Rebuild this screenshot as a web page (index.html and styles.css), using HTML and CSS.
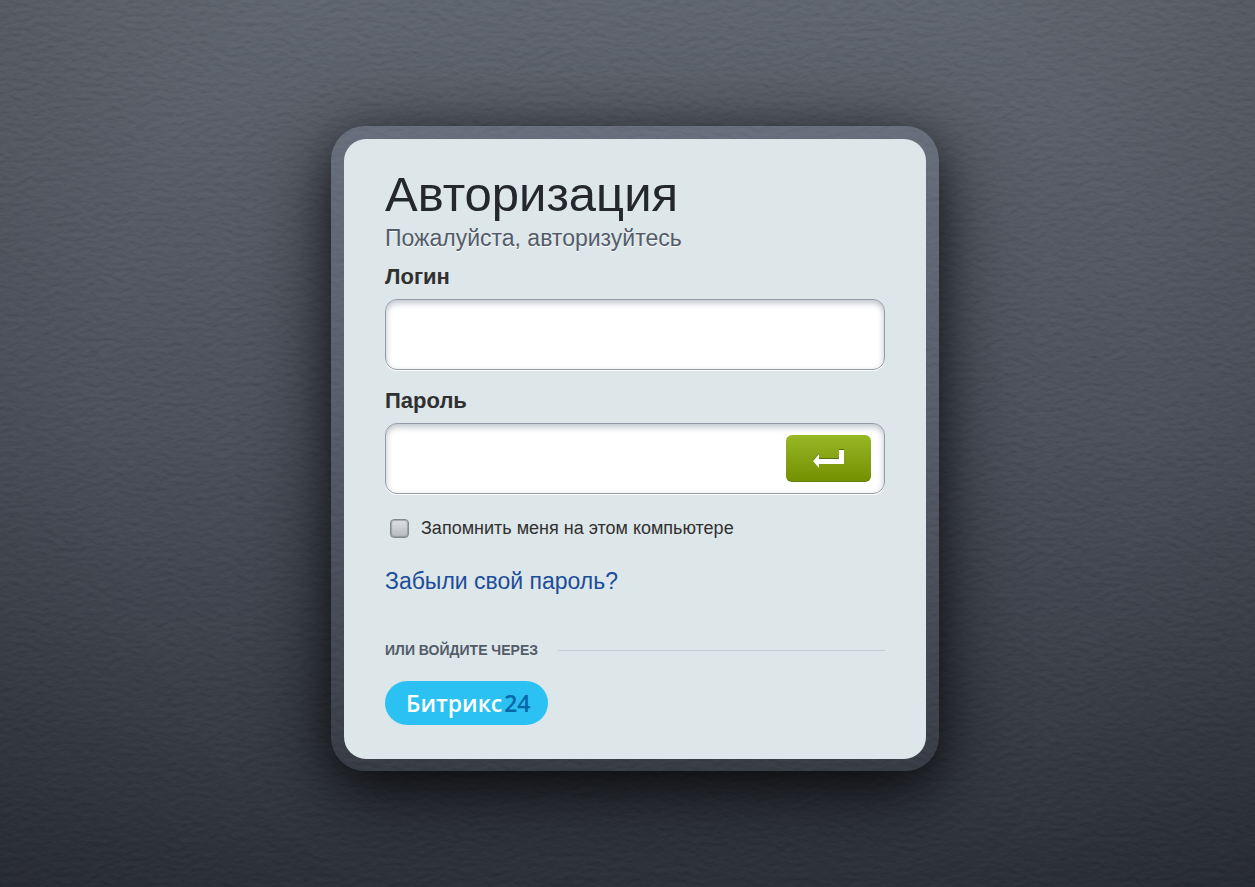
FILE: index.html
```
<!DOCTYPE html>
<html lang="ru">
<head>
<meta charset="utf-8">
<meta name="viewport" content="width=device-width, initial-scale=1">
<title>Авторизация</title>
<link rel="stylesheet" href="styles.css">
</head>
<body>
<svg class="leather" aria-hidden="true">
  <filter id="grain" x="0" y="0" width="100%" height="100%" color-interpolation-filters="sRGB">
    <feTurbulence type="fractalNoise" baseFrequency="0.11 0.2" numOctaves="4" seed="8" result="noise"/>
    <feDiffuseLighting in="noise" surfaceScale="1" diffuseConstant="0.56" lighting-color="#fff">
      <feDistantLight azimuth="270" elevation="60"/>
    </feDiffuseLighting>
  </filter>
  <rect width="100%" height="100%" filter="url(#grain)"/>
</svg>
<main class="page">
  <div class="frame">
    <form class="card">
      <h1 class="title">Авторизация</h1>
      <p class="subtitle">Пожалуйста, авторизуйтесь</p>
      <label class="label" for="login">Логин</label>
      <div class="field">
        <input class="input" id="login" name="login" type="text">
      </div>
      <label class="label" for="password">Пароль</label>
      <div class="field">
        <input class="input" id="password" name="password" type="password">
        <button class="submit" type="submit" aria-label="Войти">
          <svg width="32" height="22" viewBox="0 -2 32 22" aria-hidden="true">
            <path class="arrow-shadow" d="M0 11L6 4V9H26V0H31V14H6V18Z"/>
            <path class="arrow" d="M0 12L6 5V10H26V1H31V15H6V19Z"/>
          </svg>
        </button>
      </div>
      <div class="remember">
        <input class="checkbox" id="remember" name="remember" type="checkbox">
        <label for="remember">Запомнить меня на этом компьютере</label>
      </div>
      <a class="forgot" href="#">Забыли свой пароль?</a>
      <div class="divider">или войдите через</div>
      <a class="bitrix" href="#">Битрикс<span class="bitrix-num">24</span></a>
    </form>
  </div>
</main>
</body>
</html>
```
FILE: styles.css
```
* {
  box-sizing: border-box;
}

body {
  margin: 0;
  background: radial-gradient(ellipse 75% 110% at 50% 45%, transparent 55%, rgba(0, 0, 0, 0.2)), linear-gradient(#616770, #4c515c 50%, #2e323a);
  font-family: "Liberation Sans", Arial, sans-serif;
  color: #303030;
}

.leather {
  position: fixed;
  inset: 0;
  width: 100%;
  height: 100%;
  mix-blend-mode: soft-light;
  opacity: 0.5;
  z-index: -1;
}

.page {
  display: flex;
  align-items: center;
  justify-content: center;
  min-height: 100vh;
  padding: 10px 0 0 15px;
}

.frame {
  width: 100%;
  max-width: 608px;
  padding: 13px 13px 12px;
  border-radius: 34px;
  background: linear-gradient(rgba(136, 146, 168, 0.3), rgba(110, 115, 125, 0.05));
  box-shadow: 0 20px 80px rgba(0, 0, 0, 0.75), 0 12px 36px rgba(0, 0, 0, 0.35);
}

.card {
  padding: 27px 41px 34px;
  border-radius: 22px;
  background: #dde6e9;
}

.title {
  margin: 0;
  font-size: 49px;
  font-weight: 400;
  line-height: 56px;
  color: #24282d;
}

.subtitle {
  margin: 0 0 9px;
  font-size: 23px;
  line-height: 32px;
  color: #535c69;
  text-shadow: 0 1px 0 #fff;
}

.label {
  display: block;
  font-size: 22px;
  font-weight: 700;
  line-height: 28px;
}

.field {
  position: relative;
  margin: 8px 0 17px;
}

.input {
  display: block;
  width: 100%;
  height: 71px;
  padding: 0 20px;
  border: 1px solid #929ba8;
  border-radius: 12px;
  background: #fff;
  box-shadow: inset 0 3px 6px rgba(90, 105, 125, 0.4), 0 1px 0 #fff;
  font: inherit;
  font-size: 30px;
}

.submit {
  position: absolute;
  top: 12px;
  right: 14px;
  display: flex;
  align-items: center;
  justify-content: center;
  width: 85px;
  height: 47px;
  padding: 0;
  border: 0;
  border-bottom: 1px solid #668206;
  border-radius: 6px;
  background: linear-gradient(#98b725, #729000);
}

.arrow {
  fill: #fff;
}

.arrow-shadow {
  fill: #54700a;
}

.remember {
  display: flex;
  align-items: center;
  gap: 12px;
  margin: 22px 0 0 5px;
  font-size: 18px;
  line-height: 24px;
}

.checkbox {
  appearance: none;
  width: 19px;
  height: 19px;
  margin: 0;
  border: 1px solid #84898d;
  border-radius: 4px;
  background: linear-gradient(#dfe2e4, #b4b9bd);
  box-shadow: inset 0 0 1px 1px rgba(125, 132, 138, 0.6);
}

.forgot {
  display: block;
  margin: 25px 0 44px;
  font-size: 23px;
  line-height: 32px;
  color: #1c4d99;
  text-decoration: none;
}

.divider {
  display: flex;
  align-items: center;
  gap: 20px;
  margin-bottom: 22px;
  font-size: 14px;
  font-weight: 700;
  line-height: 18px;
  text-transform: uppercase;
  color: #535c69;
}

.divider::after {
  content: "";
  flex: 1;
  height: 1px;
  background: #c6ced3;
}

.bitrix {
  display: block;
  width: 163px;
  padding-left: 21px;
  border-radius: 22px;
  background: #2bc1f3;
  font-family: "Open Sans", sans-serif;
  font-size: 23px;
  font-weight: 600;
  line-height: 44px;
  color: #fff;
  text-decoration: none;
}

.bitrix-num {
  margin-left: 2px;
  color: #0768a8;
}
```
